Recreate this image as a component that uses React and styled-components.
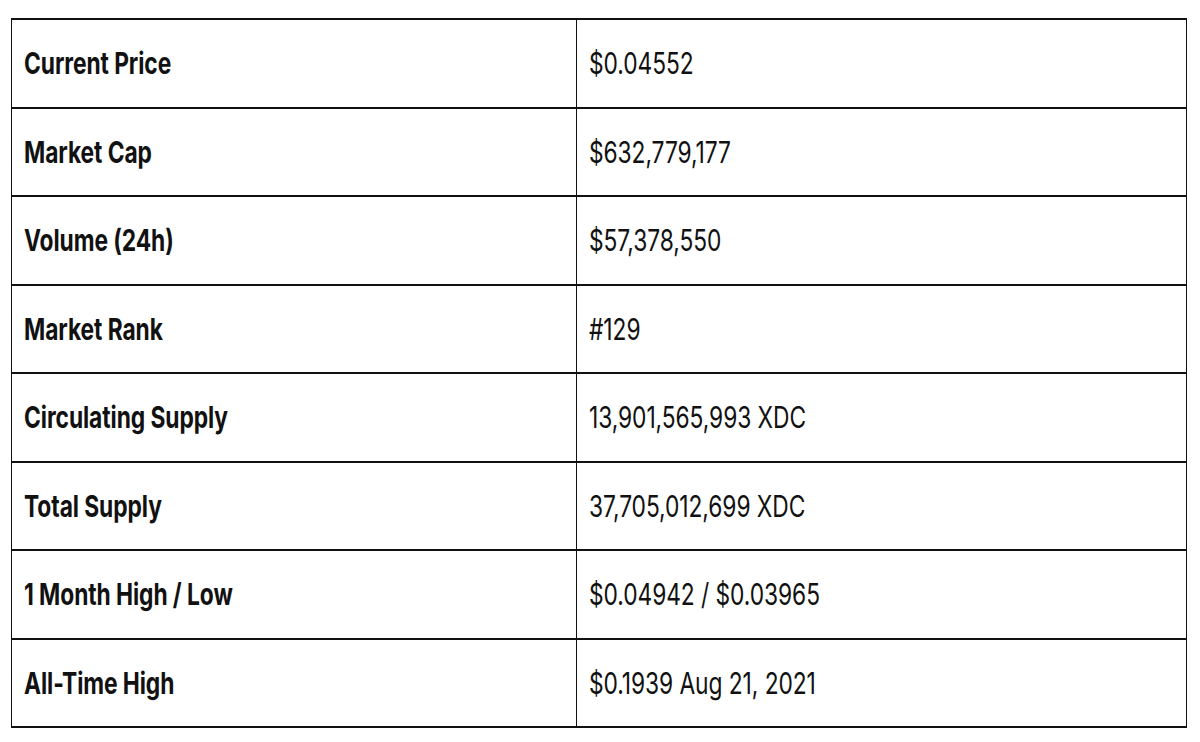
import React from 'react'
import styled, { createGlobalStyle } from 'styled-components'

const stats = [
  { label: 'Current Price', value: '$0.04552' },
  { label: 'Market Cap', value: '$632,779,177' },
  { label: 'Volume (24h)', value: '$57,378,550' },
  { label: 'Market Rank', value: '#129' },
  { label: 'Circulating Supply', value: '13,901,565,993 XDC' },
  { label: 'Total Supply', value: '37,705,012,699 XDC' },
  { label: '1 Month High / Low', value: '$0.04942 / $0.03965' },
  { label: 'All-Time High', value: '$0.1939 Aug 21, 2021' },
]

const GlobalStyle = createGlobalStyle`
  body {
    margin: 0;
    background: #fff;
    font-family: Inter, Roboto, "Liberation Sans", sans-serif;
    color: #111;
  }
`

const Page = styled.div`
  padding: 18px 13px 0 11px;
`

const Table = styled.table`
  width: 100%;
  border-collapse: collapse;
  border: 2px solid #111;
  border-left-width: 1px;
  border-right-width: 1px;
`

const Row = styled.tr`
  height: 88.5px;
  border-bottom: 2px solid #111;
`

const Cell = styled.td`
  padding: 0 12px;
  vertical-align: middle;
  width: ${(p) => (p.$label ? '540px' : 'auto')};
  border-right: ${(p) => (p.$label ? '1px solid #111' : 'none')};
`

const Text = styled.span`
  display: inline-block;
  white-space: nowrap;
  font-size: 30px;
  font-weight: ${(p) => (p.$bold ? 700 : 400)};
  letter-spacing: -0.1px;
  transform: scaleX(0.76);
  transform-origin: left center;
`

export default function App() {
  return (
    <>
      <GlobalStyle />
      <Page>
        <Table>
          <tbody>
            {stats.map((s) => (
              <Row key={s.label}>
                <Cell $label>
                  <Text $bold>{s.label}</Text>
                </Cell>
                <Cell>
                  <Text>{s.value}</Text>
                </Cell>
              </Row>
            ))}
          </tbody>
        </Table>
      </Page>
    </>
  )
}
